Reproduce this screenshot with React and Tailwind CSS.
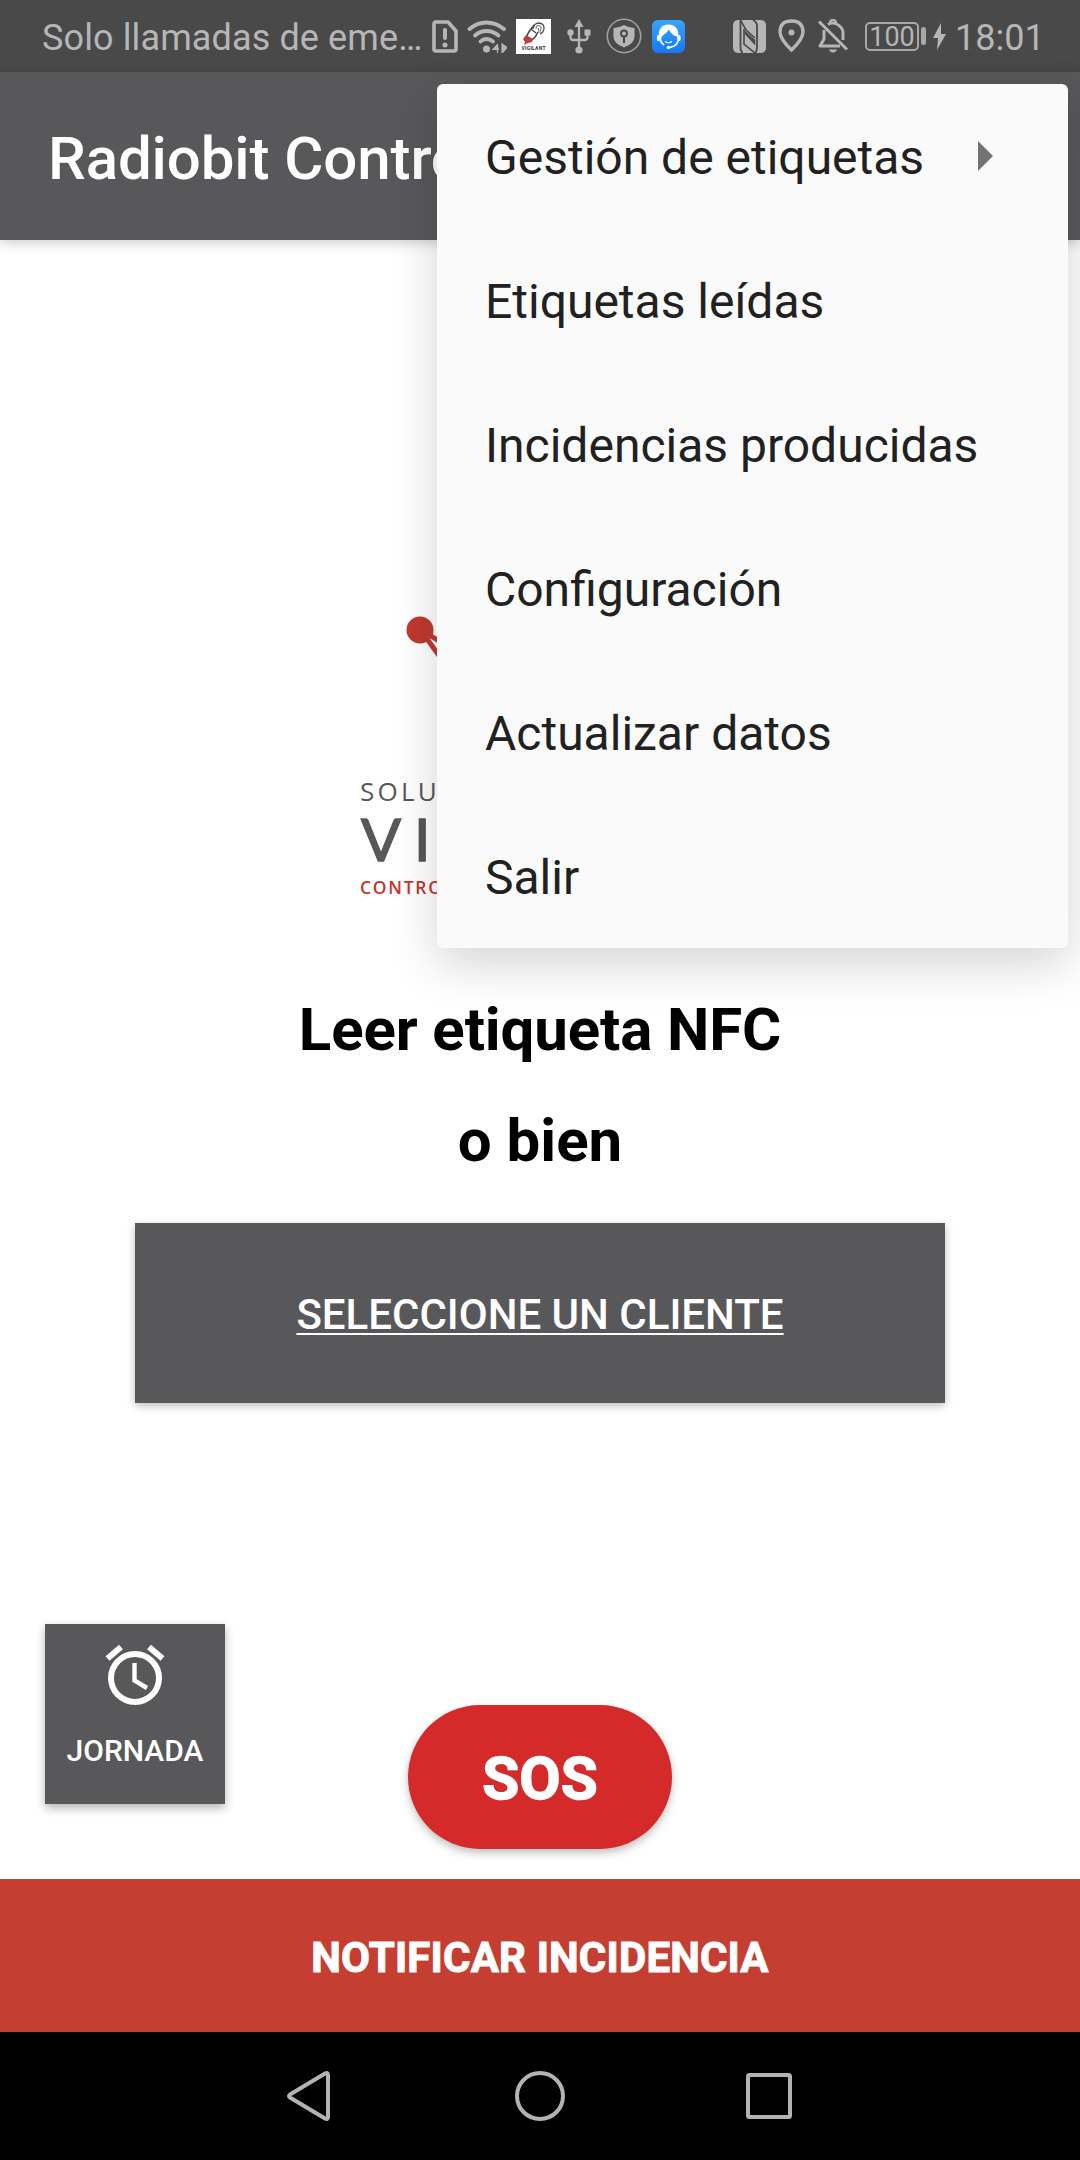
const menuItems = [
  { label: 'Gestión de etiquetas', submenu: true },
  { label: 'Etiquetas leídas' },
  { label: 'Incidencias producidas' },
  { label: 'Configuración' },
  { label: 'Actualizar datos' },
  { label: 'Salir' },
];

const SimAlertIcon = () => (
  <svg className="ml-[6px] shrink-0" width="26" height="33" viewBox="0 0 26 33" fill="none">
    <path d="M4 2h12l8 9v18q0 2-2 2H4q-2 0-2-2V4q0-2 2-2z" stroke="#b6b6b7" strokeWidth="3.6" strokeLinejoin="round" />
    <path d="M13 10v8" stroke="#b6b6b7" strokeWidth="4" strokeLinecap="round" />
    <circle cx="13" cy="25" r="2.5" fill="#b6b6b7" />
  </svg>
);

const WifiIcon = () => (
  <svg className="ml-[9px] shrink-0" width="40" height="33" viewBox="0 0 40 33" fill="none">
    <g stroke="#b6b6b7" strokeWidth="3.8" strokeLinecap="round">
      <path d="M2.500 9Q10 2.500 19.500 2.500T37 9" />
      <path d="M8 15.500Q13 11 19.500 11T31.500 15.500" />
      <path d="M13.500 21.500Q16 19 19.500 19T26 21.500" />
    </g>
    <circle cx="19.500" cy="29" r="3.500" fill="#b6b6b7" />
    <path d="M30.500 24v9M30.500 24.500L26 29.500h6M35 24v9l5-5.500z" fill="#b6b6b7" stroke="#b6b6b7" strokeWidth="1.200" />
  </svg>
);

const VigilantIcon = () => (
  <svg className="ml-[9px] shrink-0" width="35" height="35" viewBox="0 0 35 35" fill="none">
    <path d="M0 0h35v35H0z" fill="#fff" />
    <path d="M17 10q1-6 6-6 5 .5 5 5 0 4-4 6" stroke="#555" strokeWidth="1.400" />
    <path d="M20 10q0-3.500 2.500-3.500t2.500 3-2 4M22.500 9v3.500" stroke="#777" strokeWidth="1.100" />
    <path d="M18 6q-5 6-8 12M22 13q-2 5-6 8" stroke="#444" strokeWidth="1.500" />
    <path d="M15 10l5 4" stroke="#444" strokeWidth="1.300" />
    <path d="M10 16l7 4-1 3-4 1-4 2 1-3-2-3z" fill="#b8413a" />
    <text x="5.500" y="31" fontSize="5" fontWeight="700" textLength="24" fill="#333" fontFamily="Roboto, sans-serif">VIGILANT</text>
  </svg>
);

const UsbIcon = () => (
  <svg className="ml-[16px] shrink-0" width="24" height="35" viewBox="0 0 24 35" fill="none">
    <path d="M12 6v24M3.500 13v5q0 3 3 3h11q3 0 3-3v-5" stroke="#b6b6b7" strokeWidth="2.300" />
    <path d="M12 0l4.500 8h-9z" fill="#b6b6b7" />
    <circle cx="3.500" cy="13.500" r="3.200" fill="#b6b6b7" />
    <path d="M17.500 10.500h6v6h-6z" fill="#b6b6b7" />
    <circle cx="12" cy="31" r="3.600" fill="#b6b6b7" />
  </svg>
);

const ShieldIcon = () => (
  <svg className="ml-[15px] shrink-0" width="36" height="36" viewBox="0 0 36 36" fill="none">
    <circle cx="18" cy="18" r="16.700" stroke="#a0a0a1" strokeWidth="1.600" />
    <path d="M18 7q5 3 10.500 3v8.500q0 7-10.500 11-10.500-4-10.500-11V10Q13 10 18 7z" fill="#b6b6b7" />
    <circle cx="18" cy="15.500" r="3" stroke="#49494a" strokeWidth="1.900" />
    <path d="M18 18v7" stroke="#49494a" strokeWidth="2.200" />
  </svg>
);

const SupportIcon = () => (
  <svg className="ml-[10px] shrink-0" width="33" height="33" viewBox="0 0 33 33" fill="none">
    <defs>
      <linearGradient id="supportBg" x1="0" y1="0" x2="0" y2="1">
        <stop offset="0" stopColor="#38a5fb" />
        <stop offset="1" stopColor="#1479f5" />
      </linearGradient>
    </defs>
    <rect width="33" height="33" rx="6" fill="url(#supportBg)" />
    <path d="M7 17C6 9 10 4.500 16.500 4.500S27 9 26.500 17C22 16 18.500 13.500 17 9.500 14 14 10 15 9.500 18L9 20z" fill="#fff" />
    <path d="M8 19q1 4 4 6M26.500 17q.5 9-9 10.500" stroke="#fff" strokeWidth="1.600" />
    <path d="M6.500 16.500v3M27 16.500v3" stroke="#fff" strokeWidth="3.200" strokeLinecap="round" />
    <path d="M13 21.500q3.500 2.500 7 0" stroke="#fff" strokeWidth="1.200" />
    <circle cx="16.500" cy="27.500" r="1.800" fill="#fff" />
  </svg>
);

const NfcIcon = () => (
  <svg className="ml-[48px] shrink-0" width="33" height="33" viewBox="0 0 33 33" fill="none" stroke="#49494a">
    <rect width="33" height="33" rx="5" fill="#b6b6b7" stroke="none" />
    <path d="M7.500 0v28q0 3 2 5" strokeWidth="1.800" />
    <path d="M8 1l5 9 9 8" strokeWidth="1.600" />
    <path d="M11 9v15l11 9" strokeWidth="1.600" />
    <path d="M12 14l10 11v-5L12 11z" fill="#49494a" strokeWidth=".5" />
    <path d="M20 0q4 2 4 6v21q0 3-1.500 6" strokeWidth="1.800" />
  </svg>
);

const PinIcon = () => (
  <svg className="ml-[12px] shrink-0" width="27" height="34" viewBox="0 0 27 34" fill="none">
    <path d="M13.500 31Q2 20 2 13 2 2 13.500 2T25 13q0 7-11.500 18z" stroke="#b6b6b7" strokeWidth="3.400" />
    <circle cx="13.500" cy="13.500" r="3" fill="#b6b6b7" />
  </svg>
);

const BellOffIcon = () => (
  <svg className="ml-[12px] shrink-0" width="32" height="34" viewBox="0 0 32 34" fill="none">
    <path d="M2 2.500l28 28" stroke="#b6b6b7" strokeWidth="3" />
    <path d="M11 5.500Q15 3 19.500 5q6.500 3 6.500 9v7" stroke="#b6b6b7" strokeWidth="3" />
    <path d="M7 11v9l-4 7h20" stroke="#b6b6b7" strokeWidth="3" strokeLinejoin="round" />
    <path d="M13 4q0-3 3-3t3 3" stroke="#b6b6b7" strokeWidth="2.200" />
    <path d="M12 30.500h8q-1 3-4 3t-4-3z" fill="#b6b6b7" />
  </svg>
);

const StatusBar = () => (
  <div className="flex h-[72px] shrink-0 items-center bg-[#49494a] text-[36px] leading-none text-[#b6b6b7]">
    <span className="ml-[42px] w-[384px] shrink-0 whitespace-nowrap pt-[3px] tracking-[0.12px]">Solo llamadas de eme…</span>
    <SimAlertIcon />
    <WifiIcon />
    <VigilantIcon />
    <UsbIcon />
    <ShieldIcon />
    <SupportIcon />
    <NfcIcon />
    <PinIcon />
    <BellOffIcon />
    <div className="ml-[16px] flex h-[29px] w-[54px] shrink-0 items-center justify-center rounded-[5px] border-2 border-[#a8a8a9] pt-[2px] text-[27px]">
      100
    </div>
    <div className="ml-[2px] h-[18px] w-[5px] shrink-0 rounded-sm bg-[#a8a8a9]" />
    <svg className="ml-[7px] shrink-0" width="13" height="27" viewBox="0 0 13 27">
      <path d="M8 0L0 15h5L4 27l9-16H8z" fill="#b6b6b7" />
    </svg>
    <span className="ml-[9px] pt-[3px]">18:01</span>
  </div>
);

const Logo = () => (
  <div className="mt-[360px] h-[310px] w-[360px] whitespace-nowrap">
    <svg className="block" width="360" height="178" viewBox="0 0 360 178" fill="none">
      <path d="M60 29l110 70M60 29l70 98" stroke="#c0392f" strokeWidth="5" />
      <circle cx="60" cy="30" r="13.500" fill="#c0392f" />
    </svg>
    <div className="font-['Open_Sans',sans-serif] text-[26px] leading-[26px] tracking-[3.200px] text-[#58585a]">SOLUCIONES</div>
    <div className="mt-[5px] pl-[1px] font-['Lato',sans-serif] text-[59px] leading-[60px] tracking-[13px] text-[#58585a] [-webkit-text-stroke:1.500px_#58585a]">
      VIGILANT
    </div>
    <div className="mt-[8px] font-['Open_Sans',sans-serif] text-[17.500px] font-semibold leading-[20px] tracking-[1.700px] text-[#c0392f]">CONTROL DE RONDAS</div>
  </div>
);

const OverflowMenu = () => (
  <ul className="absolute left-[437px] top-[84px] w-[631px] rounded-[6px] bg-[#fafafa] shadow-[0_16px_48px_rgba(0,0,0,0.17)]">
    {menuItems.map((item) => (
      <li key={item.label} className="flex h-[144px] items-center justify-between pl-[48px] pr-[75px] text-[48px] text-[#212121]">
        <span className="whitespace-nowrap pt-[4px]">{item.label}</span>
        {item.submenu && (
          <svg width="15" height="30" viewBox="0 0 15 30">
            <path d="M0 0l15 15L0 30z" fill="#737373" />
          </svg>
        )}
      </li>
    ))}
  </ul>
);

const NavigationBar = () => (
  <div className="flex h-[128px] shrink-0 items-center justify-center bg-black">
    <svg width="508" height="54" viewBox="0 0 508 54" fill="none" stroke="#b3b3b3" strokeWidth="4">
      <path d="M4 25.500L39 4.500q3-1.500 3 1.500v42q0 3-3 1.500L4 28.500q-2-1.500 0-3z" />
      <circle cx="254" cy="27" r="23" />
      <rect x="462" y="6" width="42" height="42" rx="1.500" />
    </svg>
  </div>
);

export default function App() {
  return (
    <div className="relative flex h-[2160px] w-[1080px] flex-col overflow-hidden bg-white font-['Roboto',sans-serif]">
      <StatusBar />
      <header className="z-10 flex h-[168px] shrink-0 items-center bg-[#58585a] pl-[48px] pt-[5px] text-[60px] font-medium tracking-[-0.1px] text-white shadow-[0_3px_12px_rgba(0,0,0,0.2)]">
        Radiobit Control
      </header>

      <main className="flex h-[1639px] shrink-0 flex-col items-center">
        <Logo />
        <h1 className="mt-[80px] text-[60px] font-bold leading-[80px] tracking-[-0.12px]">Leer etiqueta NFC</h1>
        <p className="mt-[31px] text-[60px] font-bold leading-[80px]">o bien</p>
        <button className="mt-[42px] h-[180px] w-[810px] shrink-0 bg-[#58585a] pt-[2px] text-[42px] font-medium text-white underline decoration-2 underline-offset-[4px] shadow-[0_3px_8px_rgba(0,0,0,0.25)]">
          SELECCIONE UN CLIENTE
        </button>

        {/* Workday button and panic button */}
        <div className="mt-[221px] flex w-full items-start">
          <button className="ml-[45px] flex h-[180px] w-[180px] flex-col items-center bg-[#58585a] text-white shadow-[0_4px_9px_rgba(0,0,0,0.3)]">
            <svg className="mt-[20px]" width="60" height="62" viewBox="0 0 60 62" fill="none" stroke="#fff">
              <circle cx="30" cy="34" r="24" strokeWidth="6" />
              <path d="M2.500 14.500L16 3M44 3l13.500 11.500" strokeWidth="6" />
              <path d="M29.500 19v17.500l12.500 7.500" strokeWidth="4.400" />
            </svg>
            <span className="mt-[25px] text-[30px] font-medium leading-[40px]">JORNADA</span>
          </button>
          <button className="ml-[183px] mt-[81px] h-[144px] w-[264px] rounded-full bg-[#d52a2a] pt-[4px] text-[60px] font-bold text-white shadow-[0_4px_9px_rgba(0,0,0,0.25)] [-webkit-text-stroke:1.5px_white]">
            SOS
          </button>
        </div>
      </main>

      <button className="h-[153px] shrink-0 bg-[#c43e32] pt-[4px] text-[42px] font-bold tracking-[0.15px] text-white [-webkit-text-stroke:1px_white]">
        NOTIFICAR INCIDENCIA
      </button>
      <NavigationBar />
      <div className="absolute inset-0 z-20">
        <OverflowMenu />
      </div>
    </div>
  );
}
